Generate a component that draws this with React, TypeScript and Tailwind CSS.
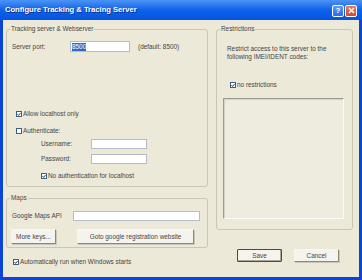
import React from "react";

const font = "font-['Liberation_Sans',Arial,sans-serif]";

function Check({ checked }: { checked?: boolean }) {
  return (
    <span className="flex h-[6px] w-[6px] shrink-0 items-center justify-center border border-[#3b5f86] bg-white">
      {checked && (
        <svg width="5" height="5" viewBox="0 0 5 5">
          <path d="M0.6 2.2 L1.9 3.6 L4.4 0.8" fill="none" stroke="#111" strokeWidth="1.1" />
        </svg>
      )}
    </span>
  );
}

function CheckRow({ checked, label, className }: { checked?: boolean; label: string; className?: string }) {
  return (
    <div className={`flex h-[8px] items-center gap-[1px] ${className ?? ""}`}>
      <Check checked={checked} />
      <span>{label}</span>
    </div>
  );
}

function Button({ label, className, main }: { label: string; className?: string; main?: boolean }) {
  return (
    <div
      className={`flex items-center justify-center rounded-[1px] border bg-[#f4f3ee] ${
        main
          ? "border-[#4a4a4a] shadow-[inset_-1px_-1px_0_#a9a796]"
          : "border-[#f7f6f1] border-r-[#8a887c] border-b-[#8a887c] shadow-[1px_1px_0_#c9c7b9]"
      } ${className ?? ""}`}
    >
      {label}
    </div>
  );
}

export default function App() {
  return (
    <div className={`flex h-[280px] w-[362px] flex-col bg-[#0a45d6] ${font} text-[6.4px] leading-[8px] text-[#454545]`}>
      {/* title bar */}
      <div className="flex h-[20px] items-center bg-gradient-to-b from-[#4a93f5] via-[#0c62ea] to-[#0653de] px-[5px]">
        <span className="text-[7.6px] font-bold text-white [text-shadow:1px_1px_0_#0a2f8f]">
          Configure Tracking &amp; Tracing Server
        </span>
        <div className="ml-auto flex gap-[1px] pt-[1px]">
          <div className="flex h-[12px] w-[12px] items-center justify-center rounded-[2px] border border-white bg-gradient-to-b from-[#5f9cf8] to-[#2a68e6] text-[8px] font-bold leading-none text-white">
            ?
          </div>
          <div className="flex h-[12px] w-[12px] items-center justify-center rounded-[2px] border border-white bg-gradient-to-b from-[#ea7b5c] to-[#d4472a]">
            <svg width="7" height="7" viewBox="0 0 7 7">
              <path d="M1 1 L6 6 M6 1 L1 6" stroke="white" strokeWidth="1.5" />
            </svg>
          </div>
        </div>
      </div>

      {/* body */}
      <div className="mx-[3px] mb-[3px] flex flex-1 bg-[#ece9d8] pl-[3px] pt-[5px]">
        {/* left column */}
        <div className="flex w-[202px] flex-col">
          <fieldset className="h-[162px] rounded-[3px] border border-[#c9c6b6] px-[5px]">
            <legend className="-ml-[2px] px-[1px]">Tracking server &amp; Webserver</legend>
            <div className="mt-[8px] flex h-[11px] items-center">
              <span className="w-[58px]">Server port:</span>
              <div className="flex h-[11px] w-[60px] items-center border border-[#b4bcc6] bg-white pl-[1px]">
                <span className="bg-[#316ac5] text-white">8500</span>
              </div>
              <span className="ml-[8px]">(default: 8500)</span>
            </div>
            <CheckRow checked label="Allow localhost only" className="ml-[4px] mt-[58px]" />
            <CheckRow label="Authenticate:" className="ml-[4px] mt-[9px]" />
            <div className="mt-[4px] flex h-[10px] items-center pl-[29px]">
              <span className="w-[50px]">Username:</span>
              <div className="h-[10px] w-[56px] border border-[#b4bcc6] bg-white" />
            </div>
            <div className="mt-[5px] flex h-[10px] items-center pl-[29px]">
              <span className="w-[50px]">Password:</span>
              <div className="h-[10px] w-[56px] border border-[#b4bcc6] bg-white" />
            </div>
            <CheckRow checked label="No authentication for localhost" className="ml-[29px] mt-[8px]" />
          </fieldset>

          <fieldset className="mt-[7px] h-[54px] rounded-[3px] border border-[#c9c6b6] px-[5px]">
            <legend className="-ml-[2px] px-[1px]">Maps</legend>
            <div className="mt-[9px] flex h-[10px] items-center">
              <span className="w-[61px]">Google Maps API</span>
              <div className="h-[10px] w-[127px] border border-[#b4bcc6] bg-white" />
            </div>
            <div className="mt-[8px] flex">
              <Button label="More keys..." className="-ml-[1px] h-[15px] w-[45px]" />
              <Button label="Goto google registration website" className="ml-[21px] h-[15px] w-[117px]" />
            </div>
          </fieldset>

          <CheckRow checked label="Automatically run when Windows starts" className="ml-[7px] mt-[10px]" />
        </div>

        {/* right column */}
        <div className="ml-[8px] flex w-[137px] flex-col">
          <fieldset className="h-[205px] rounded-[3px] border border-[#c9c6b6] px-[6px]">
            <legend className="-ml-[3px] px-[1px]">Restrictions</legend>
            <p className="ml-[4px] mt-[12px]">
              Restrict access to this server to the
              <br />
              following IMEI/IDENT codes:
            </p>
            <CheckRow checked label="no restrictions" className="ml-[7px] mt-[20px]" />
            <div className="mt-[9px] h-[121px] w-[121px] border border-[#9d9b8f] border-b-[#fbfaf6] border-r-[#fbfaf6] bg-[#eeebdf] shadow-[inset_1px_1px_0_#d6d3c4]" />
          </fieldset>
          <div className="mt-[19px] flex">
            <Button main label="Save" className="ml-[21px] h-[13px] w-[45px]" />
            <Button label="Cancel" className="ml-[12px] h-[13px] w-[45px]" />
          </div>
        </div>
      </div>
    </div>
  );
}
